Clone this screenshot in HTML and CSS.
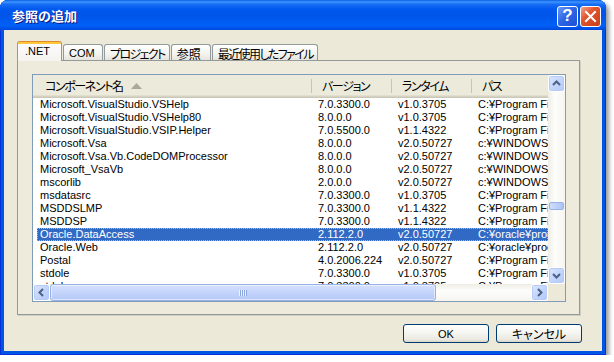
FILE: index.html
```html
<!DOCTYPE html>
<html lang="ja">
<head>
    <meta charset="UTF-8">
    <title>参照の追加</title>
    <link rel="stylesheet" href="styles.css">
</head>
<body>
    <div class="window">
        <div class="titlebar">
            <span class="title">参照の追加</span>
            <div class="caption-buttons">
                <div class="cap help">?</div>
                <div class="cap close">
                    <svg viewBox="0 0 21 21" width="21" height="21">
                        <path d="M6 6 L15 15 M15 6 L6 15" stroke="#fff" stroke-width="2" stroke-linecap="square" />
                    </svg>
                </div>
            </div>
        </div>

        <div class="client">
            <div class="tabs">
                <div class="tab active">.NET</div>
                <div class="tab">COM</div>
                <div class="tab ja kana">プロジェクト</div>
                <div class="tab ja">参照</div>
                <div class="tab ja kana">最近使用したファイル</div>
            </div>

            <div class="panel">
                <div class="listview">
                    <div class="lv-main">
                        <div class="lv-content">
                            <div class="lv-header">
                                <div class="hcell first">
                                    <span class="ja">コンポーネント名</span>
                                    <svg class="sort" viewBox="0 0 11 6" width="11" height="6">
                                        <polygon points="0,6 5.5,0 11,6" fill="#aca899" />
                                    </svg>
                                </div>
                                <div class="hcell"><span class="ja">バージョン</span></div>
                                <div class="hcell"><span class="ja">ランタイム</span></div>
                                <div class="hcell last"><span class="ja">パス</span></div>
                            </div>
                            <div class="lv-rows" id="rows"></div>
                        </div>
                        <div class="vscroll">
                            <div class="sb-btn">
                                <svg viewBox="0 0 15 15" width="15" height="15"><polyline points="4,9 7.5,5.5 11,9" fill="none" stroke="#4d6185" stroke-width="2" /></svg>
                            </div>
                            <div class="v-track top"></div>
                            <div class="v-thumb"></div>
                            <div class="v-track"></div>
                            <div class="sb-btn">
                                <svg viewBox="0 0 15 15" width="15" height="15"><polyline points="4,6 7.5,9.5 11,6" fill="none" stroke="#4d6185" stroke-width="2" /></svg>
                            </div>
                        </div>
                    </div>
                    <div class="hscroll-row">
                        <div class="hscroll">
                            <div class="sb-btn">
                                <svg viewBox="0 0 15 15" width="15" height="15"><polyline points="9,4 5.5,7.5 9,11" fill="none" stroke="#4d6185" stroke-width="2" /></svg>
                            </div>
                            <div class="h-thumb"><span class="grip"></span></div>
                            <div class="h-track"></div>
                            <div class="sb-btn">
                                <svg viewBox="0 0 15 15" width="15" height="15"><polyline points="6,4 9.5,7.5 6,11" fill="none" stroke="#4d6185" stroke-width="2" /></svg>
                            </div>
                        </div>
                        <div class="corner"></div>
                    </div>
                </div>
            </div>

            <div class="buttons">
                <div class="btn">OK</div>
                <div class="btn ja">キャンセル</div>
            </div>
        </div>
    </div>

    <script>
        // Components shown in the .NET tab
        const components = [
            ['Microsoft.VisualStudio.VSHelp', '7.0.3300.0', 'v1.0.3705', 'C:¥Program Files'],
            ['Microsoft.VisualStudio.VSHelp80', '8.0.0.0', 'v1.0.3705', 'C:¥Program Files'],
            ['Microsoft.VisualStudio.VSIP.Helper', '7.0.5500.0', 'v1.1.4322', 'C:¥Program Files'],
            ['Microsoft.Vsa', '8.0.0.0', 'v2.0.50727', 'c:¥WINDOWS¥'],
            ['Microsoft.Vsa.Vb.CodeDOMProcessor', '8.0.0.0', 'v2.0.50727', 'c:¥WINDOWS¥'],
            ['Microsoft_VsaVb', '8.0.0.0', 'v2.0.50727', 'c:¥WINDOWS¥'],
            ['mscorlib', '2.0.0.0', 'v2.0.50727', 'c:¥WINDOWS¥'],
            ['msdatasrc', '7.0.3300.0', 'v1.0.3705', 'C:¥Program Files'],
            ['MSDDSLMP', '7.0.3300.0', 'v1.1.4322', 'C:¥Program Files'],
            ['MSDDSP', '7.0.3300.0', 'v1.1.4322', 'C:¥Program Files'],
            ['Oracle.DataAccess', '2.112.2.0', 'v2.0.50727', 'C:¥oracle¥product'],
            ['Oracle.Web', '2.112.2.0', 'v2.0.50727', 'C:¥oracle¥product'],
            ['Postal', '4.0.2006.224', 'v2.0.50727', 'C:¥Program Files'],
            ['stdole', '7.0.3300.0', 'v1.0.3705', 'C:¥Program Files'],
            ['stdole', '7.0.3300.0', 'v1.0.3705', 'C:¥Program Files']
        ];

        const selectedIndex = 10;
        const rows = document.getElementById('rows');

        components.forEach((item, i) => {
            const row = document.createElement('div');
            row.className = 'row' + (i === selectedIndex ? ' selected' : '');
            item.forEach(text => {
                const cell = document.createElement('div');
                cell.className = 'cell';
                cell.textContent = text;
                row.appendChild(cell);
            });
            rows.appendChild(row);
        });
    </script>
</body>
</html>
```

FILE: styles.css
```css
* {
    box-sizing: border-box;
    margin: 0;
    padding: 0;
}

body {
    background: #fff;
    font-family: 'Liberation Sans', 'Noto Sans CJK JP', sans-serif;
    font-size: 11px;
    color: #000;
}

.ja {
    font-family: 'Noto Sans CJK JP', sans-serif;
    font-size: 12px;
    font-feature-settings: "palt";
}

/* Window frame */

.window {
    width: 606px;
    height: 355px;
    display: flex;
    flex-direction: column;
    background: #0055e5;
    border-radius: 8px 8px 0 0;
    box-shadow: inset 0 0 0 1px #0831d9, 3px 3px 4px rgba(0, 0, 0, 0.4);
}

.titlebar {
    height: 30px;
    flex: none;
    display: flex;
    align-items: center;
    justify-content: space-between;
    padding: 0 5px 0 12px;
    border-radius: 8px 8px 0 0;
    background: linear-gradient(#0a5fe8 0, #3d95ff 2px, #1a6ff5 4px, #0058ee 9px, #0054e8 50%, #0060f8 85%, #0048dc 100%);
}

.title {
    font-family: 'Noto Sans CJK JP', sans-serif;
    font-size: 13px;
    font-weight: bold;
    color: #fff;
    text-shadow: 1px 1px 0 #0a1883;
    padding-top: 1px;
}

.caption-buttons {
    display: flex;
    gap: 2px;
    padding-top: 2px;
}

.cap {
    width: 21px;
    height: 21px;
    border: 1px solid #fff;
    border-radius: 3px;
    display: flex;
    align-items: center;
    justify-content: center;
    color: #fff;
}

.cap svg {
    margin: -1px;
}

.help {
    font-family: 'Liberation Sans', sans-serif;
    font-size: 17px;
    font-weight: bold;
    background: linear-gradient(135deg, #6d9af5 0%, #2f66e4 45%, #1d50d6 100%);
}

.close {
    background: linear-gradient(135deg, #f3a088 0%, #e2542c 40%, #c8401c 100%);
}

.client {
    flex: 1;
    margin: 0 4px 4px;
    background: #ece9d8;
    padding: 11px 20px 0 13px;
    display: flex;
    flex-direction: column;
}

/* Tabs */

.tabs {
    height: 19px;
    display: flex;
    align-items: flex-end;
    gap: 1px;
    position: relative;
    z-index: 1;
}

.tab {
    height: 16px;
    min-width: 40px;
    padding: 0 4px 0 5px;
    display: flex;
    align-items: center;
    border: 1px solid #919b9c;
    border-bottom: none;
    border-radius: 3px 3px 0 0;
    background: linear-gradient(#fff, #f3f3ef 60%, #e6e4dc);
    white-space: nowrap;
}

.tab.ja {
    padding-top: 1px;
}

.tab.kana {
    letter-spacing: -1.6px;
}

.tab.active {
    height: 20px;
    min-width: 45px;
    padding-left: 7px;
    margin-bottom: -1px;
    border-top: none;
    background: linear-gradient(#e68b2c 0, #e68b2c 1px, #ffc73c 1px, #ffc73c 3px, #fcfcfe 3px, #f4f3ee);
}

.panel {
    height: 255px;
    margin-right: 2px;
    border: 1px solid #919b9c;
    background: #eeebdc;
    box-shadow: 1px 1px 0 #d0cebf;
    padding: 13px 13px 12px 14px;
}

/* List view */

.listview {
    height: 100%;
    border: 1px solid #7f9db9;
    background: #fff;
    display: flex;
    flex-direction: column;
}

.lv-main {
    flex: 1;
    display: flex;
    min-height: 0;
}

.lv-content {
    flex: 1;
    overflow: hidden;
}

.lv-header,
.row {
    display: grid;
    grid-template-columns: 279px 80px 80px 120px;
}

.lv-header {
    height: 23px;
    background: #ebeadb;
    box-shadow: inset 0 -1px #cbc7b8, inset 0 -2px #d6d2c2, inset 0 -3px #e2decd;
}

.hcell {
    display: flex;
    align-items: center;
    padding: 0 0 2px 10px;
    background: linear-gradient(#c7c5b2, #c7c5b2) right 0 top 4px / 1px 14px no-repeat;
}

.hcell .ja {
    letter-spacing: -1.4px;
}

.hcell.first {
    padding-left: 12px;
}

.hcell.last {
    background: none;
}

.sort {
    margin-left: 8px;
}

.row {
    height: 13px;
    line-height: 13px;
    white-space: nowrap;
}

.cell {
    overflow: hidden;
    padding-left: 6px;
}

.cell:first-child {
    padding-left: 7px;
}

.row.selected {
    background: linear-gradient(90deg, transparent 4px, #316ac5 4px);
    color: #fff;
    position: relative;
}

.row.selected::before {
    content: '';
    position: absolute;
    top: 0;
    bottom: 0;
    left: 4px;
    right: 0;
    border: 1px dotted #e8b050;
}

/* Scroll bars */

.vscroll {
    width: 17px;
    flex: none;
    display: flex;
    flex-direction: column;
    background: linear-gradient(90deg, #eeede5, #fdfdfb 40%, #f6f5f0);
}

.sb-btn {
    width: 17px;
    height: 17px;
    flex: none;
    display: flex;
    align-items: center;
    justify-content: center;
    border: 1px solid #fff;
    border-radius: 3px;
    background: linear-gradient(135deg, #dde8fe, #c2d5fc 50%, #b2c9f7);
    box-shadow: inset 0 0 0 1px #b8cbf6;
}

.v-track {
    flex: 1;
}

.v-track.top {
    flex: none;
    height: 110px;
}

.v-thumb {
    height: 8px;
    flex: none;
    margin: 0 1px;
    border: 1px solid #98b1e7;
    border-radius: 2px;
    background: linear-gradient(90deg, #d0ddfb, #bccefa 60%, #adc3f5);
}

.hscroll-row {
    height: 17px;
    flex: none;
    display: flex;
}

.hscroll {
    flex: 1;
    display: flex;
    background: linear-gradient(#eeede5, #fdfdfb 40%, #f6f5f0);
}

.h-thumb {
    width: 386px;
    display: flex;
    align-items: center;
    justify-content: center;
    border: 1px solid #98b1e7;
    border-radius: 3px;
    background: linear-gradient(#d5e0fc, #c4d4fb 50%, #b5c9f6);
    box-shadow: inset 0 0 0 1px rgba(255, 255, 255, 0.5);
}

.grip {
    width: 8px;
    height: 6px;
    background: repeating-linear-gradient(90deg, #eef2fd 0, #eef2fd 1px, #8ba5dc 1px, #8ba5dc 2px);
}

.h-track {
    flex: 1;
}

.corner {
    width: 17px;
    background: #ece9d8;
}

/* Dialog buttons */

.buttons {
    display: flex;
    justify-content: flex-end;
    gap: 7px;
    margin-top: 9px;
}

.btn {
    width: 86px;
    height: 19px;
    display: flex;
    align-items: center;
    justify-content: center;
    border: 1px solid #003c74;
    border-radius: 3px;
    background: linear-gradient(#fff, #f4f4f0 50%, #ebe9e0 85%, #d8d4c6);
}
```
